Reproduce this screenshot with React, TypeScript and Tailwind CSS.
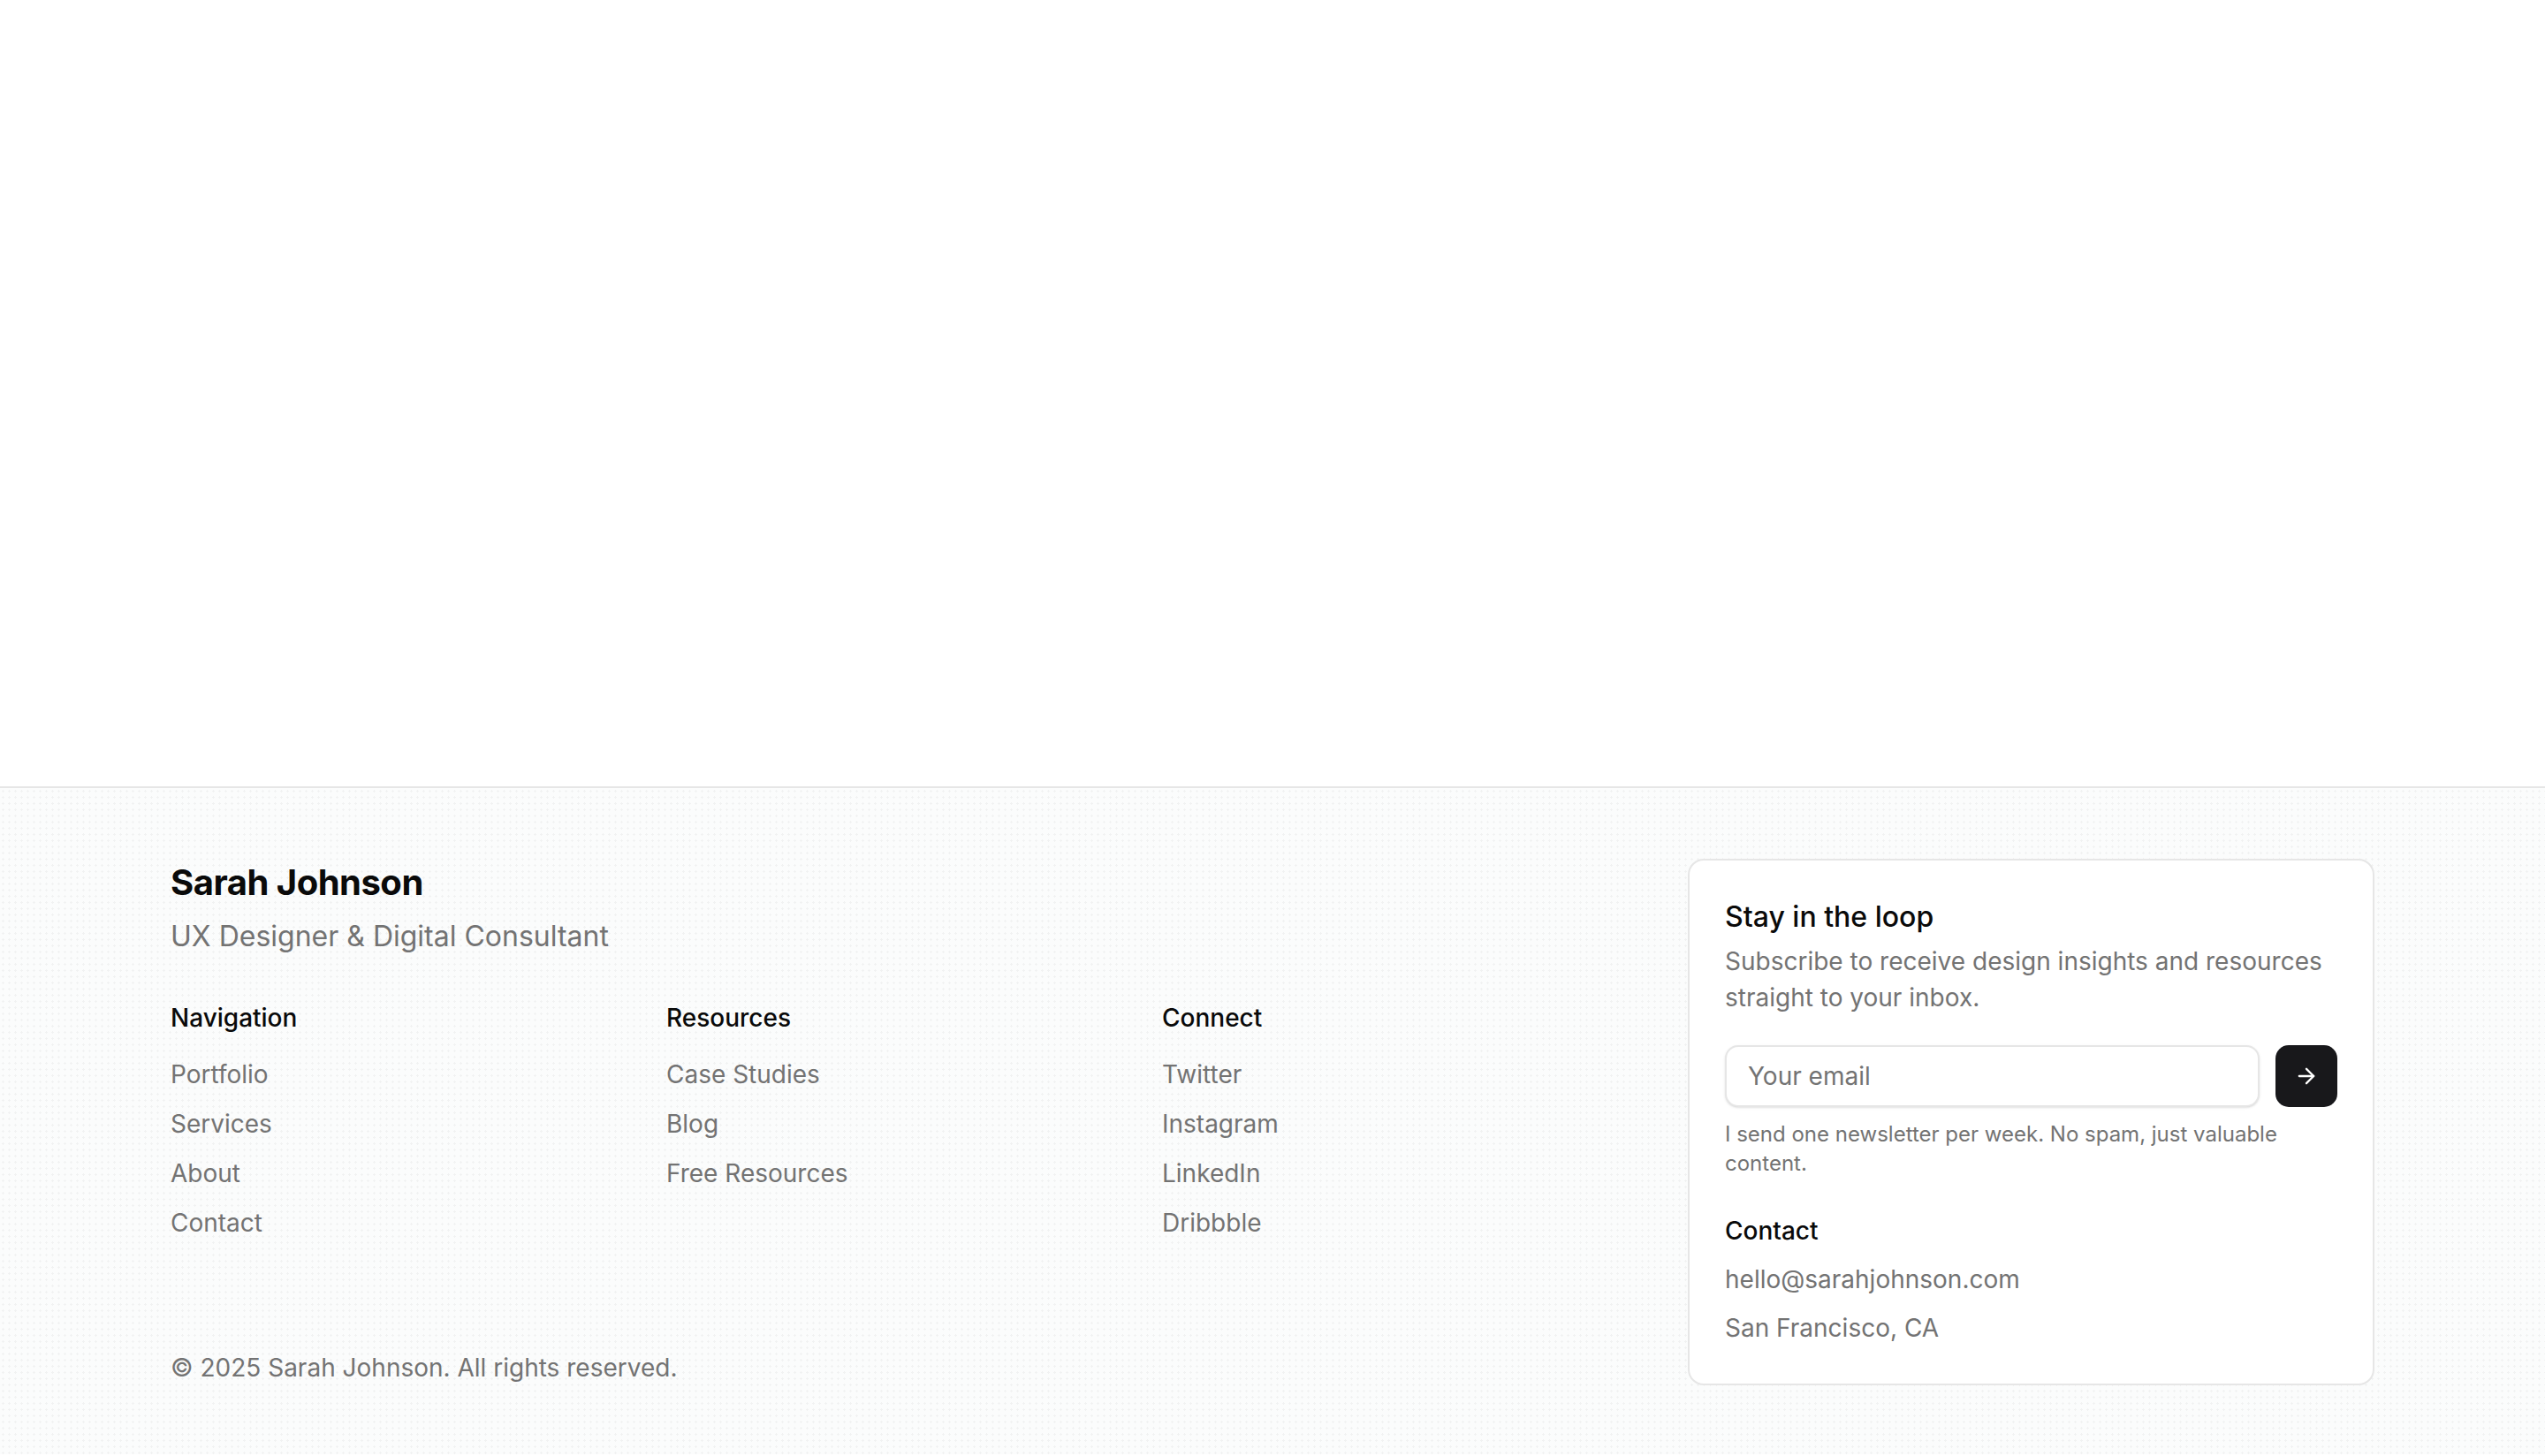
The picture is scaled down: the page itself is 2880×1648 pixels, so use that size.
import { ArrowRight } from 'lucide-react';

const columns = [
  { title: 'Navigation', links: ['Portfolio', 'Services', 'About', 'Contact'] },
  { title: 'Resources', links: ['Case Studies', 'Blog', 'Free Resources'] },
  { title: 'Connect', links: ['Twitter', 'Instagram', 'LinkedIn', 'Dribbble'] },
];

const App = () => {
  return (
    <div className="min-h-[1648px] bg-white font-['Inter','Liberation_Sans',sans-serif] antialiased">
      <div className="h-[890px]"></div>
      <footer className="border-t-2 border-[#e6e6e6] bg-[#fbfcfc] bg-[radial-gradient(circle,#f1f2f2_1px,transparent_1.2px)] bg-[size:7px_7px] px-[193px] pt-[80px] pb-[78px]">
        <div className="flex justify-between">
          <div className="flex flex-col">
            <h2 className="mt-[1px] text-[40px] leading-[52px] font-bold text-[#0a0a0a] tracking-[-0.5px]">
              Sarah Johnson
            </h2>
            <p className="mt-[13px] text-[32px] leading-[44px] text-[#737373]">
              UX Designer &amp; Digital Consultant
            </p>

            <div className="mt-[50px] flex">
              {columns.map(col => {
                return (
                  <div key={col.title} className="w-[561px]">
                    <h3 className="text-[28px] leading-[40px] font-medium text-[#0a0a0a]">
                      {col.title}
                    </h3>
                    <ul className="mt-[24px] flex flex-col gap-[16px]">
                      {col.links.map(link => (
                        <li key={link} className="text-[28px] leading-[40px] text-[#737373]">
                          {link}
                        </li>
                      ))}
                    </ul>
                  </div>
                );
              })}
            </div>

            <p className="mt-auto text-[28px] leading-[40px] text-[#737373]">
              © 2025 Sarah Johnson. All rights reserved.
            </p>
          </div>

          <div className="-ml-[2px] w-[777px] self-start rounded-[18px] border-2 border-[#e6e6e6] bg-white px-[40px] pt-[42px] pb-[43px]">
            <h3 className="text-[32px] leading-[44px] font-medium text-[#0a0a0a]">
              Stay in the loop
            </h3>
            <p className="mt-[8px] text-[28px] leading-[41px] text-[#737373]">
              Subscribe to receive design insights and resources straight to your inbox.
            </p>
            <div className="mt-[33px] flex gap-[18px]">
              <input
                type="email"
                placeholder="Your email"
                className="h-[70px] flex-1 rounded-[15px] border-2 border-[#e6e6e6] bg-white px-[24px] text-[28px] text-[#0a0a0a] shadow-sm outline-none placeholder:text-[#737373]"
              />
              <button className="flex h-[70px] w-[70px] items-center justify-center rounded-[15px] bg-[#18181b] text-white">
                <ArrowRight size={28} strokeWidth={2} />
              </button>
            </div>
            <p className="mt-[14px] text-[24px] leading-[33px] text-[#737373]">
              I send one newsletter per week. No spam, just valuable content.
            </p>
            <h3 className="mt-[40px] text-[28px] leading-[40px] font-medium text-[#0a0a0a]">
              Contact
            </h3>
            <div className="mt-[15px] flex flex-col gap-[15px]">
              <p className="text-[28px] leading-[40px] text-[#737373]">hello@sarahjohnson.com</p>
              <p className="text-[28px] leading-[40px] text-[#737373]">San Francisco, CA</p>
            </div>
          </div>
        </div>
      </footer>
    </div>
  );
};

export default App;
